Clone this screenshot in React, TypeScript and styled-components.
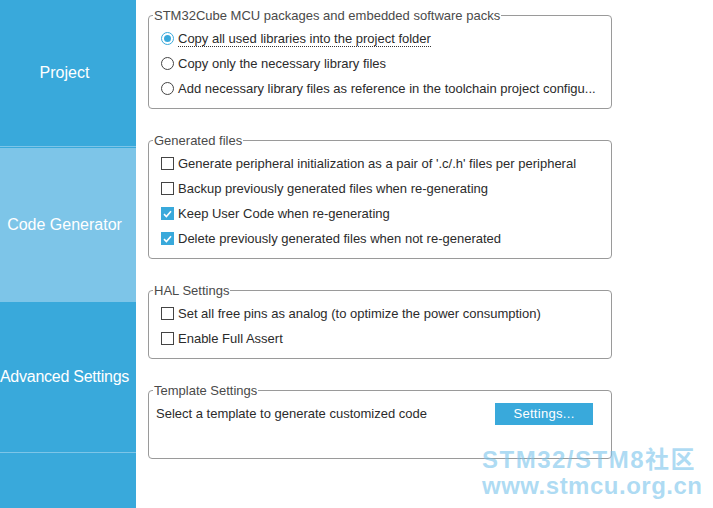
import React from 'react';
import styled, { createGlobalStyle } from 'styled-components';

const GlobalStyle = createGlobalStyle`
  html, body {
    margin: 0;
    padding: 0;
    background: #ffffff;
  }
  body {
    font-family: 'Liberation Sans', Arial, sans-serif;
  }
`;

const Page = styled.div`
  position: relative;
  display: flex;
  width: 713px;
  height: 508px;
  overflow: hidden;
  background: #ffffff;
`;

const Sidebar = styled.nav`
  display: flex;
  flex-direction: column;
  width: 136px;
  flex: 0 0 136px;
  background: #39a9db;
`;

const NavItem = styled.div<{ $height: number; $active?: boolean; $divider?: boolean; $spacing?: number }>`
  display: flex;
  align-items: center;
  justify-content: center;
  height: ${p => p.$height}px;
  padding-right: 7px;
  background: ${p => (p.$active ? '#7dc5e8' : '#39a9db')};
  border-top: ${p => (p.$active ? '1px solid #39a9db' : 'none')};
  border-bottom: ${p => (p.$divider ? '1px solid #7dc5e8' : 'none')};
  color: #ffffff;
  font-size: 16px;
  letter-spacing: ${p => p.$spacing ?? 0}px;
  white-space: nowrap;
  overflow: visible;
`;

const Content = styled.main`
  display: flex;
  flex-direction: column;
  gap: 24px;
  padding: 8px 0 0 12px;
`;

const Group = styled.fieldset<{ $bottom?: number }>`
  width: 442px;
  margin: 0;
  padding: 3px 8px ${p => p.$bottom ?? 7}px 12px;
  border: 1px solid #9a9a9a;
  border-radius: 4px;
  min-inline-size: 0;
`;

const Legend = styled.legend`
  margin-left: -8px;
  padding: 0 1px;
  font-size: 13px;
  line-height: 15px;
  color: #4a4a4a;
`;

const Option = styled.label`
  display: flex;
  align-items: center;
  gap: 4px;
  height: 25px;
  font-size: 13px;
  color: #2b2b2b;
  white-space: nowrap;
`;

const OptionText = styled.span<{ $focused?: boolean }>`
  line-height: 15px;
  border-bottom: 1px dotted ${p => (p.$focused ? '#333' : 'transparent')};
  margin-top: ${p => (p.$focused ? '1px' : '0')};
`;

const RadioMark = styled.span<{ $checked?: boolean }>`
  box-sizing: border-box;
  display: inline-flex;
  align-items: center;
  justify-content: center;
  width: 13px;
  height: 13px;
  border-radius: 50%;
  border: 1px solid ${p => (p.$checked ? '#39a9db' : '#444')};
  background: #fff;

  &::after {
    content: '';
    width: 7px;
    height: 7px;
    border-radius: 50%;
    background: ${p => (p.$checked ? '#39a9db' : 'transparent')};
  }
`;

const CheckMark = styled.span<{ $checked?: boolean }>`
  box-sizing: border-box;
  display: inline-flex;
  align-items: center;
  justify-content: center;
  width: 13px;
  height: 13px;
  border: 1px solid ${p => (p.$checked ? '#39a9db' : '#444')};
  background: ${p => (p.$checked ? '#39a9db' : '#fff')};
`;

const TemplateRow = styled.div`
  display: flex;
  align-items: center;
  height: 25px;
  margin-left: -5px;
  font-size: 13px;
  color: #2b2b2b;
`;

const SettingsButton = styled.button`
  margin-left: auto;
  margin-right: 10px;
  width: 98px;
  height: 22px;
  border: none;
  border-radius: 0;
  background: #39a9db;
  color: #ffffff;
  font-family: 'Liberation Sans', Arial, sans-serif;
  font-size: 13px;
  letter-spacing: 0.3px;
  cursor: pointer;
`;

const Watermark = styled.div`
  position: absolute;
  left: 482px;
  top: 447px;
  display: flex;
  flex-direction: column;
  font-family: 'Liberation Sans', 'Noto Sans CJK SC', Arial, sans-serif;
  font-weight: 700;
  font-size: 24px;
  line-height: 26px;
  color: rgba(120, 195, 235, 0.6);
  pointer-events: none;
`;

const WatermarkLine = styled.span<{ $spacing?: number }>`
  letter-spacing: ${p => p.$spacing ?? 0}px;
`;

const Tick = () => (
  <svg width="9" height="8" viewBox="0 0 9 8">
    <path d="M1 4.2 L3.4 6.5 L8 1.2" fill="none" stroke="#fff" strokeWidth="1.6" />
  </svg>
);

const Radio: React.FC<{ checked?: boolean; focused?: boolean; children: React.ReactNode }> = ({
  checked,
  focused,
  children,
}) => (
  <Option>
    <RadioMark $checked={checked} />
    <OptionText $focused={focused}>{children}</OptionText>
  </Option>
);

const Checkbox: React.FC<{ checked?: boolean; children: React.ReactNode }> = ({ checked, children }) => (
  <Option>
    <CheckMark $checked={checked}>{checked && <Tick />}</CheckMark>
    <OptionText>{children}</OptionText>
  </Option>
);

const App: React.FC = () => {
  return (
    <Page>
      <GlobalStyle />
      <Sidebar>
        <NavItem $height={146} $divider>
          Project
        </NavItem>
        <NavItem $height={154} $active>
          Code Generator
        </NavItem>
        <NavItem $height={150} $divider $spacing={-0.25}>
          Advanced Settings
        </NavItem>
      </Sidebar>

      <Content>
        <Group>
          <Legend>STM32Cube MCU packages and embedded software packs</Legend>
          <Radio checked focused>
            Copy all used libraries into the project folder
          </Radio>
          <Radio>Copy only the necessary library files</Radio>
          <Radio>Add necessary library files as reference in the toolchain project configu...</Radio>
        </Group>

        <Group>
          <Legend>Generated files</Legend>
          <Checkbox>Generate peripheral initialization as a pair of '.c/.h' files per peripheral</Checkbox>
          <Checkbox>Backup previously generated files when re-generating</Checkbox>
          <Checkbox checked>Keep User Code when re-generating</Checkbox>
          <Checkbox checked>Delete previously generated files when not re-generated</Checkbox>
        </Group>

        <Group>
          <Legend>HAL Settings</Legend>
          <Checkbox>Set all free pins as analog (to optimize the power consumption)</Checkbox>
          <Checkbox>Enable Full Assert</Checkbox>
        </Group>

        <Group $bottom={32}>
          <Legend>Template Settings</Legend>
          <TemplateRow>
            Select a template to generate customized code
            <SettingsButton>Settings...</SettingsButton>
          </TemplateRow>
        </Group>
      </Content>

      <Watermark>
        <WatermarkLine $spacing={1.5}>STM32/STM8社区</WatermarkLine>
        <WatermarkLine $spacing={0.5}>www.stmcu.org.cn</WatermarkLine>
      </Watermark>
    </Page>
  );
};

export default App;
